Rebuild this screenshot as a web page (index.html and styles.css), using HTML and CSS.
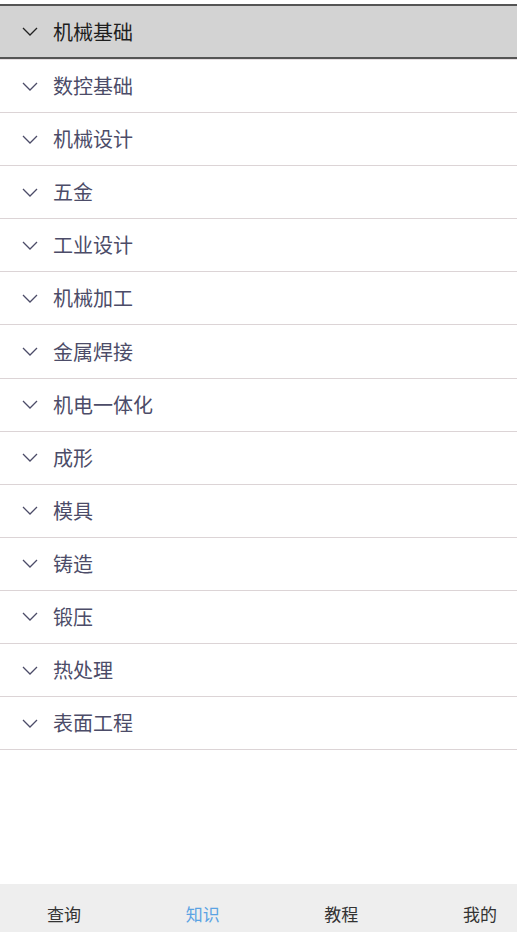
FILE: index.html
```html
<!DOCTYPE html>
<html lang="zh">
<head>
<meta charset="utf-8">
<title>知识</title>
<link rel="stylesheet" href="styles.css">
</head>
<body>
<div class="page">
  <ul class="list">
    <li class="row selected"><svg class="chev" viewBox="0 0 16 9"><path d="M1 1 L8 8 L15 1"/></svg><span>机械基础</span></li>
    <li class="row"><svg class="chev" viewBox="0 0 16 9"><path d="M1 1 L8 8 L15 1"/></svg><span>数控基础</span></li>
    <li class="row"><svg class="chev" viewBox="0 0 16 9"><path d="M1 1 L8 8 L15 1"/></svg><span>机械设计</span></li>
    <li class="row"><svg class="chev" viewBox="0 0 16 9"><path d="M1 1 L8 8 L15 1"/></svg><span>五金</span></li>
    <li class="row"><svg class="chev" viewBox="0 0 16 9"><path d="M1 1 L8 8 L15 1"/></svg><span>工业设计</span></li>
    <li class="row"><svg class="chev" viewBox="0 0 16 9"><path d="M1 1 L8 8 L15 1"/></svg><span>机械加工</span></li>
    <li class="row"><svg class="chev" viewBox="0 0 16 9"><path d="M1 1 L8 8 L15 1"/></svg><span>金属焊接</span></li>
    <li class="row"><svg class="chev" viewBox="0 0 16 9"><path d="M1 1 L8 8 L15 1"/></svg><span>机电一体化</span></li>
    <li class="row"><svg class="chev" viewBox="0 0 16 9"><path d="M1 1 L8 8 L15 1"/></svg><span>成形</span></li>
    <li class="row"><svg class="chev" viewBox="0 0 16 9"><path d="M1 1 L8 8 L15 1"/></svg><span>模具</span></li>
    <li class="row"><svg class="chev" viewBox="0 0 16 9"><path d="M1 1 L8 8 L15 1"/></svg><span>铸造</span></li>
    <li class="row"><svg class="chev" viewBox="0 0 16 9"><path d="M1 1 L8 8 L15 1"/></svg><span>锻压</span></li>
    <li class="row"><svg class="chev" viewBox="0 0 16 9"><path d="M1 1 L8 8 L15 1"/></svg><span>热处理</span></li>
    <li class="row"><svg class="chev" viewBox="0 0 16 9"><path d="M1 1 L8 8 L15 1"/></svg><span>表面工程</span></li>
  </ul>
  <div class="spacer"></div>
  <nav class="tabbar">
    <span class="tab">查询</span>
    <span class="tab active">知识</span>
    <span class="tab">教程</span>
    <span class="tab">我的</span>
  </nav>
</div>
</body>
</html>
```
FILE: styles.css
```css
html, body {
  margin: 0;
  padding: 0;
  background: #ffffff;
}
body {
  font-family: "Noto Sans CJK SC", "Noto Sans", sans-serif;
}
.page {
  display: flex;
  flex-direction: column;
  height: 100vh;
}
.list {
  list-style: none;
  margin: 4px 0 0 0;
  padding: 0;
}
.row {
  display: flex;
  align-items: center;
  gap: 15px;
  height: 52.1px;
  padding-left: 22px;
  border-bottom: 1px solid #dcd4d6;
  color: #4c4c68;
  font-size: 20px;
  line-height: 1;
}
.row.selected {
  height: 51px;
  background: #d3d3d3;
  border-top: 2px solid #555555;
  border-bottom: 2px solid #555555;
  box-shadow: 0 1px 0 #e6e0e2;
  margin-bottom: 1px;
  color: #1e1e1e;
}
.chev {
  width: 16px;
  height: 9px;
  flex: none;
}
.chev path {
  fill: none;
  stroke: #4c4c68;
  stroke-width: 1.3;
}
.selected .chev path {
  stroke: #222222;
}
.spacer {
  flex: 1;
}
.tabbar {
  display: flex;
  justify-content: space-between;
  align-items: center;
  height: 48px;
  padding: 0 20px 0 47px;
  background: #eeeeee;
}
.tab {
  font-size: 17px;
  color: #333333;
  line-height: 1;
  padding-top: 10px;
}
.tab.active {
  color: #5ba3e3;
}
```
